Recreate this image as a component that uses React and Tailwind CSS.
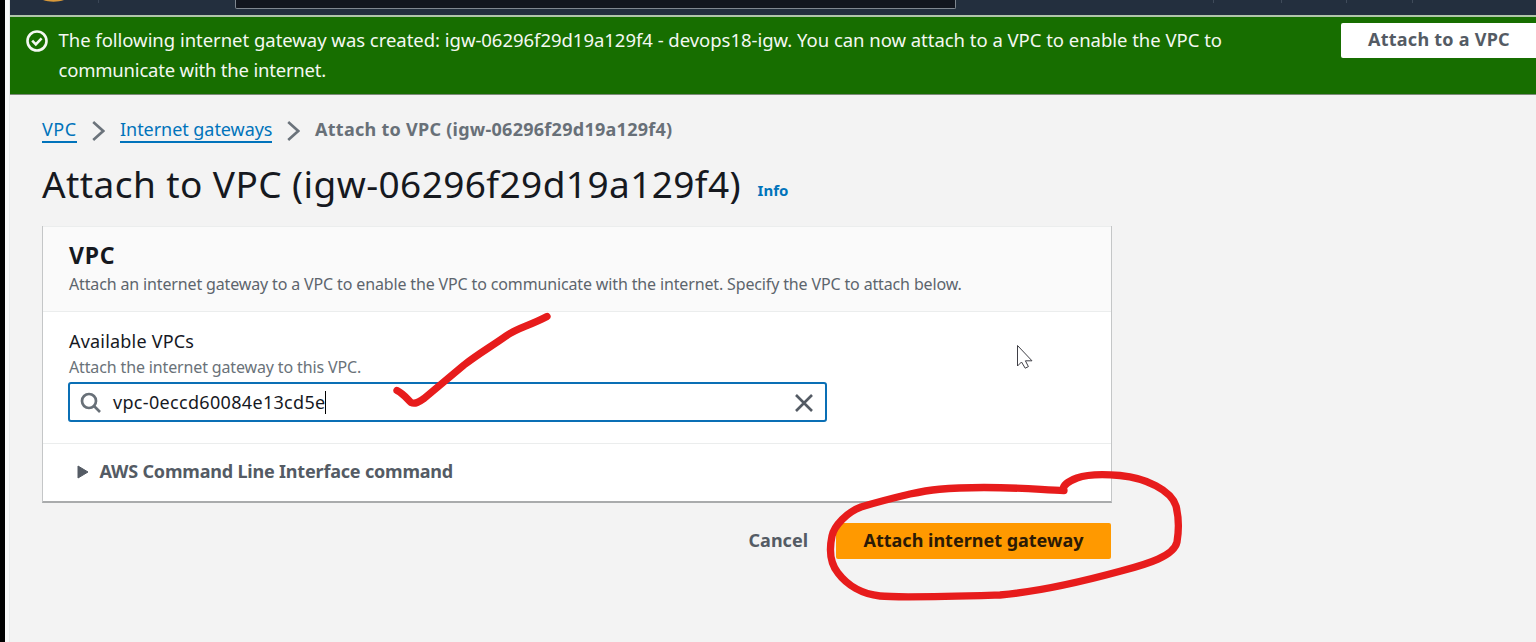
import React from "react";

function TopNav() {
  return (
    <header className="flex h-[15px] shrink-0 bg-[#232f3e]">
      <div className="flex w-[225px] shrink-0 items-start pl-[31px]">
        <svg className="block h-[3px] w-[26px]" viewBox="0 0 26 3">
          <path d="M2 0C8 2.2 17 2.2 23 0" fill="#d99a3a" />
        </svg>
        <span className="ml-[31px] h-[3px] w-px bg-[#3a4656]" />
      </div>
      <div className="h-[9px] w-[721px] shrink-0 rounded-b-[2px] border border-t-0 border-[#7f8790] bg-[#12161f]" />
      <div className="flex pl-[257px]">
        <span className="mr-[67px] h-[3px] w-px bg-[#3f4b5a]" />
        <span className="mr-[64px] h-[3px] w-px bg-[#3f4b5a]" />
        <span className="mr-[65px] h-[3px] w-px bg-[#3f4b5a]" />
        <span className="mr-[120px] h-[3px] w-px bg-[#3f4b5a]" />
      </div>
    </header>
  );
}

function Flash() {
  return (
    <section className="flex h-[80px] shrink-0 items-start border-t-2 border-b border-t-[#b0c6aa] border-b-[#7c8a79] bg-[#176e00] text-[#f4f8f2]">
      <svg className="mt-[12px] ml-[15px] h-6 w-6 shrink-0" viewBox="0 0 24 24" fill="none" stroke="currentColor" strokeWidth="2.6">
        <circle cx="12" cy="12" r="9.5" />
        <path d="M7.2 11.700l3.600 3.600 5.800-6" />
      </svg>
      <p className="mt-[8px] ml-[9.5px] w-[1282.5px] shrink-0 text-[18.5px] leading-[29.5px]">
        <span className="block tracking-[-0.03px] whitespace-nowrap">
          The following internet gateway was created: igw-06296f29d19a129f4 - devops18-igw. You can now attach to a VPC to enable the VPC to
        </span>
        <span className="block tracking-[-0.2px] whitespace-nowrap">communicate with the internet.</span>
      </p>
      <button className="mt-[6px] flex h-[35px] w-[200px] shrink-0 items-center rounded-[2px] bg-white pb-[2px] pl-[27px] text-[18px] font-bold tracking-[0.25px] whitespace-nowrap text-[#545b64]">
        Attach to a VPC
      </button>
    </section>
  );
}

function Chevron() {
  return (
    <svg className="h-5 w-[13px] shrink-0" viewBox="0 0 13 20" fill="none" stroke="#6b737b" strokeWidth="2.6">
      <path d="M1.200 1l10 9-10 9" />
    </svg>
  );
}

function Breadcrumbs() {
  return (
    <nav className="flex h-[27px] items-center text-[18px]">
      <a className="w-[35px] border-b-2 border-[#0073bb] pb-px leading-[21px] tracking-[0.5px] whitespace-nowrap text-[#0073bb]">VPC</a>
      <span className="mr-[15px] ml-[15px] flex"><Chevron /></span>
      <a className="w-[152px] border-b-2 border-[#0073bb] pb-px leading-[21px] tracking-[-0.05px] whitespace-nowrap text-[#0073bb]">Internet gateways</a>
      <span className="mr-[15px] ml-[15px] flex"><Chevron /></span>
      <span className="pb-[4px] leading-[22px] font-bold tracking-[0.27px] whitespace-nowrap text-[#687078]">Attach to VPC (igw-06296f29d19a129f4)</span>
    </nav>
  );
}

function VpcPanel() {
  return (
    <section className="h-[277px] w-[1070px] border-r border-b-2 border-l border-r-[#c4c6c7] border-b-[#a9abac] border-l-[#c4c6c7] bg-white">
      <div className="h-[86px] border-y border-[#ebeded] bg-[#fafafa] pl-[26px]">
        <h2 className="-mt-px pt-[14px] text-[23px] leading-[30px] font-bold tracking-[0.8px] text-[#16191f]">VPC</h2>
        <p className="pt-px text-[16px] leading-[27px] tracking-[-0.143px] whitespace-nowrap text-[#5d656d]">
          Attach an internet gateway to a VPC to enable the VPC to communicate with the internet. Specify the VPC to attach below.
        </p>
      </div>
      <div className="h-[132px] border-b border-[#ebeded] pt-[16px] pl-[26px]">
        <label className="block text-[18px] leading-[26px] tracking-[0.2px] whitespace-nowrap text-[#16191f]">Available VPCs</label>
        <p className="pb-[2px] text-[16px] leading-[26px] tracking-[-0.14px] whitespace-nowrap text-[#6a7279]">Attach the internet gateway to this VPC.</p>
        <div className="-ml-px flex h-[40px] w-[759px] items-center rounded-[3px] border-2 border-[#0a6fb5] bg-white pr-[11px] pl-[10px]">
          <svg className="mt-px h-[22px] w-[22px] shrink-0" viewBox="0 0 22 22" fill="none" stroke="#687078" strokeWidth="2.7">
            <circle cx="9" cy="9" r="7" />
            <path d="M14 14l6 6" />
          </svg>
          <span className="ml-[11px] text-[18px] leading-[24px] tracking-[0.32px] whitespace-nowrap text-[#16191f]">vpc-0eccd60084e13cd5e</span>
          <span className="-ml-px h-[23px] w-[1.5px] bg-black" />
          <svg className="mt-px ml-auto h-[20px] w-[20px] shrink-0" viewBox="0 0 20 20" fill="none" stroke="#545b64" strokeWidth="2.6">
            <path d="M2 2l16 16M18 2L2 18" />
          </svg>
        </div>
      </div>
      <div className="flex h-[56px] items-center pl-[34px]">
        <svg className="h-[14px] w-[12px]" viewBox="0 0 12 14">
          <path d="M1 1l10 6-10 6z" fill="#545b64" stroke="#545b64" strokeLinejoin="round" />
        </svg>
        <span className="ml-[10.5px] pb-[2px] text-[18px] font-bold tracking-[-0.19px] whitespace-nowrap text-[#545b64]">AWS Command Line Interface command</span>
      </div>
    </section>
  );
}

function Annotations() {
  return (
    <svg className="pointer-events-none absolute inset-0 h-[642px] w-[1536px]" viewBox="0 0 1536 642" fill="none">
      <g stroke="#e71c1c" strokeWidth="7.3" strokeLinecap="round" strokeLinejoin="round">
        <path d="M397 390.500C404 394 408 400 411 402.500C415 404.500 419 402 424 398.500L464 365C478 354 492 346 506 336C517 328 529 326 547 316.500" />
        <path d="M1064 490.500C1046 490.500 1027 487.500 984 487.500C945 487.500 929 490 910 494C889 499 874 503 861 507C847 512 834 526 832 536C829 550 830 563 838 573C847 585 862 594 880 596C900 598 965 596 1000 595C1035 592 1077 583 1121 571C1148 564 1174 556 1177 542C1179 530 1179 518 1176 506C1171 490 1146 478 1120 475.500C1103 474 1088 474 1077 478C1067 482 1063 485 1063 490" />
      </g>
      <path
        d="M1017.500 345.500v20.500l4-4 3.700 6.200 3.200-1.600-3-5.800h6.600z"
        fill="#fff"
        stroke="#3f3f46"
        strokeWidth="1"
      />
    </svg>
  );
}

export default function App() {
  return (
    <div className="relative flex h-[642px] w-[1536px] overflow-hidden bg-[#f3f3f3] font-['Noto_Sans',sans-serif]">
      <div className="w-[5px] shrink-0 bg-black" />
      <div className="w-[5px] shrink-0 border-r border-[#e9ebeb] bg-[#f8f8f8]" />
      <div className="flex w-[1526px] shrink-0 flex-col overflow-hidden">
        <TopNav />
        <Flash />
        <main className="flex w-[1101px] flex-col pt-[22px] pl-8">
          <Breadcrumbs />
          <div className="flex h-[82px] items-start pt-[16px]">
            <h1 className="text-[37px] leading-[48px] tracking-[0.41px] whitespace-nowrap text-[#16191f]">Attach to VPC (igw-06296f29d19a129f4)</h1>
            <a className="mt-[15px] ml-[16.5px] text-[15px] leading-[30px] font-bold text-[#0073bb]">Info</a>
          </div>
          <VpcPanel />
          <div className="flex h-[75px] items-center justify-end">
            <button className="mr-[28px] pb-px text-[18px] font-bold whitespace-nowrap text-[#545b64]">Cancel</button>
            <button className="flex h-[36px] w-[275px] items-center justify-center rounded-[2px] bg-[#ff9900] pb-px text-[18px] font-bold whitespace-nowrap text-[#2b1a06]">
              Attach internet gateway
            </button>
          </div>
        </main>
      </div>
      <Annotations />
    </div>
  );
}
